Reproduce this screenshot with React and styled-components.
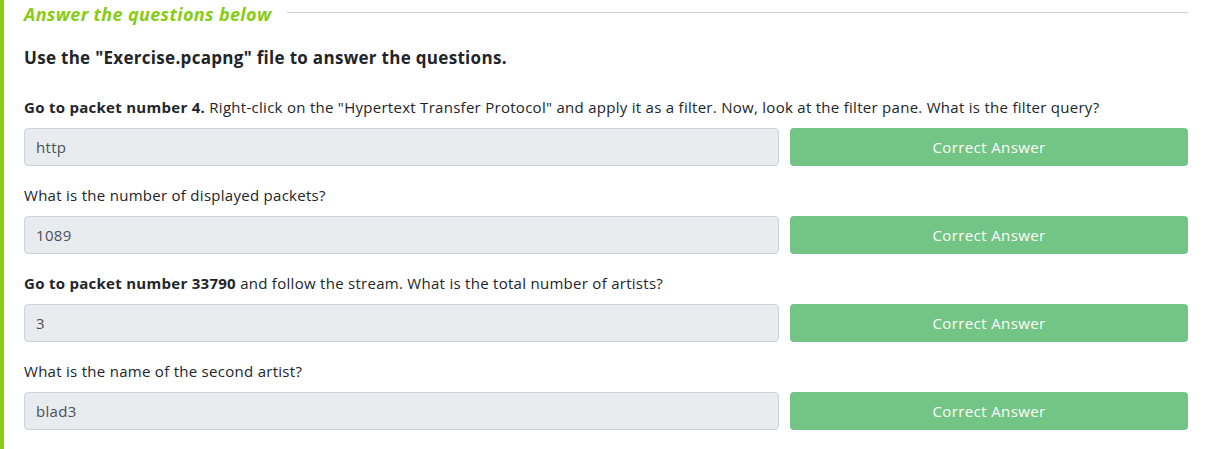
import React from "react";
import styled, { createGlobalStyle } from "styled-components";

const Global = createGlobalStyle`
  html, body { margin: 0; padding: 0; background: #fff; }
  body { font-family: "Open Sans", "Noto Sans", sans-serif; color: #212529; }
`;

const Panel = styled.div`
  border-left: 4px solid #88cc14;
  padding: 3px 18px 19px 20px;
  box-sizing: border-box;
  width: 1206px;
`;

const HeaderRow = styled.div`
  display: flex;
  align-items: center;
  gap: 16px;
  height: 22px;
`;

const HeaderTitle = styled.h4`
  margin: 0;
  font-size: 18px;
  letter-spacing: 0.35px;
  font-weight: 700;
  font-style: italic;
  color: #88cc14;
  white-space: nowrap;
`;

const Rule = styled.div`
  flex: 1;
  height: 1px;
  background: #cfcfcf;
  margin-top: -3px;
`;

const Intro = styled.p`
  margin: 21px 0 0;
  font-size: 17px;
  letter-spacing: 0.3px;
  font-weight: 700;
  color: #212529;
`;

const Questions = styled.div`
  display: flex;
  flex-direction: column;
  gap: 18px;
  margin-top: 27px;
`;

const Question = styled.div`
  display: flex;
  flex-direction: column;
  gap: 10px;
`;

const Label = styled.p`
  margin: 0;
  font-size: 15px;
  letter-spacing: 0.28px;
  line-height: 22px;
  color: #212529;
  b { font-weight: 700; }
`;

const AnswerRow = styled.div`
  display: grid;
  grid-template-columns: 1fr 398px;
  gap: 11px;
`;

const Input = styled.div`
  height: 38px;
  box-sizing: border-box;
  background: #e9ecef;
  border: 1px solid #ced4da;
  border-radius: 4px;
  padding: 0 11px;
  display: flex;
  align-items: center;
  font-size: 15px;
  letter-spacing: 0.3px;
  color: #495057;
`;

const Button = styled.button`
  height: 38px;
  border: none;
  border-radius: 4px;
  background: #73c586;
  color: #fff;
  font-family: inherit;
  font-size: 15px;
  letter-spacing: 0.4px;
`;

const items = [
  { q: <><b>Go to packet number 4.</b> Right-click on the "Hypertext Transfer Protocol" and apply it as a filter. Now, look at the filter pane. What is the filter query?</>, a: "http" },
  { q: <>What is the number of displayed packets?</>, a: "1089" },
  { q: <><b>Go to packet number 33790</b> and follow the stream. What is the total number of artists?</>, a: "3" },
  { q: <>What is the name of the second artist?</>, a: "blad3" },
];

export default function App() {
  return (
    <>
      <Global />
      <Panel>
        <HeaderRow>
          <HeaderTitle>Answer the questions below</HeaderTitle>
          <Rule />
        </HeaderRow>
        <Intro>Use the "Exercise.pcapng" file to answer the questions.</Intro>
        <Questions>
          {items.map((it, i) => (
            <Question key={i}>
              <Label>{it.q}</Label>
              <AnswerRow>
                <Input>{it.a}</Input>
                <Button>Correct Answer</Button>
              </AnswerRow>
            </Question>
          ))}
        </Questions>
      </Panel>
    </>
  );
}
